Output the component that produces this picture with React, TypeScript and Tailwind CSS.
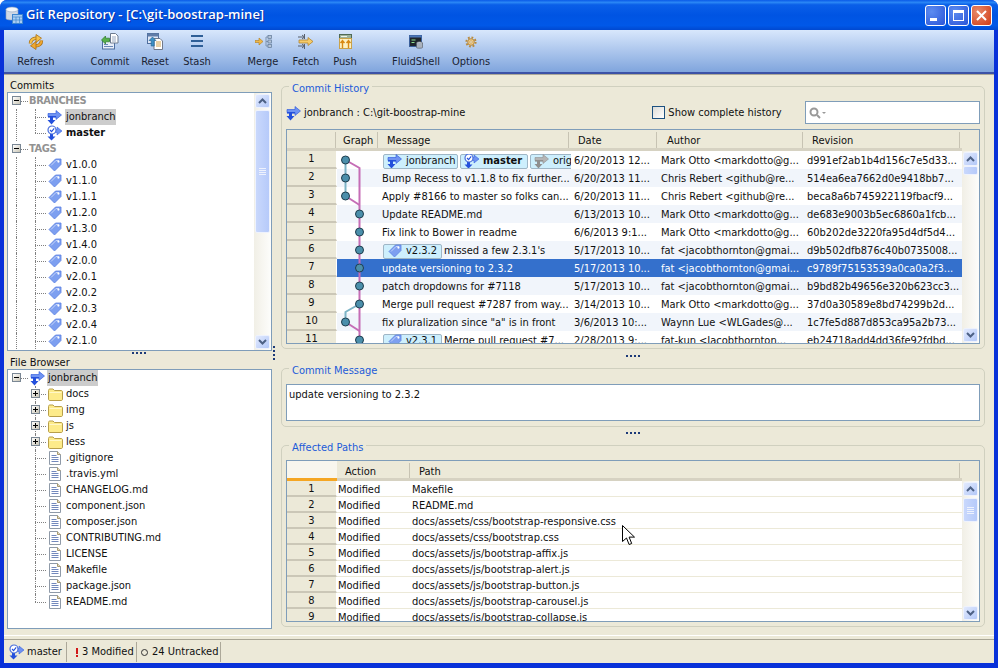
import type { ReactNode } from "react";

const COMMITS = [
  { msg: "", date: "6/20/2013 12...", author: "Mark Otto <markdotto@g...", rev: "d991ef2ab1b4d156c7e5d33..." },
  { msg: "Bump Recess to v1.1.8 to fix further...", date: "6/20/2013 11...", author: "Chris Rebert <github@re...", rev: "514ea6ea7662d0e9418bb7..." },
  { msg: "Apply #8166 to master so folks can...", date: "6/20/2013 11...", author: "Chris Rebert <github@re...", rev: "beca8a6b745922119fbacf9..." },
  { msg: "Update README.md", date: "6/13/2013 10...", author: "Mark Otto <markdotto@g...", rev: "de683e9003b5ec6860a1fcb..." },
  { msg: "Fix link to Bower in readme", date: "6/6/2013 9:1...", author: "Mark Otto <markdotto@g...", rev: "60b202de3220fa95d4df5d4..." },
  { msg: "missed a few 2.3.1's", tag: "v2.3.2", date: "5/17/2013 10...", author: "fat <jacobthornton@gmai...", rev: "d9b502dfb876c40b0735008..." },
  { msg: "update versioning to 2.3.2", date: "5/17/2013 10...", author: "fat <jacobthornton@gmai...", rev: "c9789f75153539a0ca0a2f3..." },
  { msg: "patch dropdowns for #7118", date: "5/17/2013 10...", author: "fat <jacobthornton@gmai...", rev: "b9bd82b49656e320b623cc3..." },
  { msg: "Merge pull request #7287 from way...", date: "3/14/2013 10...", author: "Mark Otto <markdotto@g...", rev: "37d0a30589e8bd74299b2d..." },
  { msg: 'fix pluralization since "a" is in front', date: "3/6/2013 10:...", author: "Waynn Lue <WLGades@...", rev: "1c7fe5d887d853ca95a2b73..." },
  { msg: "Merge pull request #7...", tag: "v2.3.1", date: "2/28/2013 9:...", author: "fat-kun <Jacobthornton...", rev: "eb24718add4dd36fe92fdbd..." },
];

const PATHS = [
  "Makefile",
  "README.md",
  "docs/assets/css/bootstrap-responsive.css",
  "docs/assets/css/bootstrap.css",
  "docs/assets/js/bootstrap-affix.js",
  "docs/assets/js/bootstrap-alert.js",
  "docs/assets/js/bootstrap-button.js",
  "docs/assets/js/bootstrap-carousel.js",
  "docs/assets/js/bootstrap-collapse.js",
];

const TAGS = ["v1.0.0", "v1.1.0", "v1.1.1", "v1.2.0", "v1.3.0", "v1.4.0", "v2.0.0", "v2.0.1", "v2.0.2", "v2.0.3", "v2.0.4", "v2.1.0"];
const FOLDERS = ["docs", "img", "js", "less"];
const FILES = [".gitignore", ".travis.yml", "CHANGELOG.md", "component.json", "composer.json", "CONTRIBUTING.md", "LICENSE", "Makefile", "package.json", "README.md"];

/* ---------- icons ---------- */

function BranchIcon({ gray = false }: { gray?: boolean }) {
  const dark = gray ? "#8f8f8f" : "#2450dc";
  const light = gray ? "#b5b5b5" : "#6f93f2";
  return (
    <svg width="16" height="16" viewBox="0 0 16 16" className="shrink-0">
      <path d="M3 8h3v3h2.5L4.5 15.5.5 11H3z" fill={dark} />
      <path d="M1 4.5h8V1.5l5.5 4.5L9 10.5V7.5H1z" fill={light} stroke={dark} strokeWidth="0.6" />
      <rect x="1" y="7" width="8" height="1.6" fill={dark} />
    </svg>
  );
}

function MasterIcon() {
  return (
    <svg width="16" height="16" viewBox="0 0 16 16" className="shrink-0">
      <path d="M3 9h3v2.5h2.5L4.5 15.5.5 11.5H3z" fill="#2450dc" />
      <path d="M8 4.5h2V2l5 4-5 4V7.5H7z" fill="#6f93f2" stroke="#2450dc" strokeWidth="0.5" />
      <circle cx="5" cy="5" r="4" fill="#fff" stroke="#4a6fdc" strokeWidth="1.2" />
      <path d="M3 5l1.6 1.6L7.2 3.4" fill="none" stroke="#2450dc" strokeWidth="1.1" />
    </svg>
  );
}

function TagIcon() {
  return (
    <svg width="14" height="14" viewBox="0 0 14 14" className="shrink-0">
      <path d="M1 7.5L7.5 1H13v5.5L6.5 13z" fill="#7d9ff0" stroke="#5a80e2" strokeWidth="0.8" strokeLinejoin="round" />
      <path d="M3 7.5L8 2.5h3" fill="none" stroke="#c4d4fa" strokeWidth="1" />
      <circle cx="10.4" cy="3.6" r="1.1" fill="#fff" />
    </svg>
  );
}

function FolderIcon() {
  return (
    <svg width="15" height="13" viewBox="0 0 15 13" className="shrink-0">
      <path d="M.5 2.5C.5 1.5 1 1 2 1h3l1.5 1.5h6.5c1 0 1.5.5 1.5 1.5v7c0 1-.5 1.5-1.5 1.5H2c-1 0-1.5-.5-1.5-1.5z" fill="#fdeb8a" stroke="#b89f4a" />
      <rect x="1.5" y="4" width="12" height="1" fill="#fff7c8" />
    </svg>
  );
}

function FileIcon() {
  return (
    <svg width="12" height="14" viewBox="0 0 12 14" className="shrink-0">
      <path d="M.5.5h8l3 3v10H.5z" fill="#fff" stroke="#8f9aa8" />
      <path d="M8.5.5v3h3" fill="#e9dcb8" stroke="#a89a70" />
      <path d="M2.5 4.5h5M2.5 6.5h7M2.5 8.5h7M2.5 10.5h7" stroke="#7288bc" />
    </svg>
  );
}

function ScrollArrow({ down = false }: { down?: boolean }) {
  return (
    <svg width="9" height="6" viewBox="0 0 9 6">
      <path d={down ? "M1 1l3.5 3.5L8 1" : "M1 5l3.5-3.5L8 5"} fill="none" stroke="#4d6185" strokeWidth="2" />
    </svg>
  );
}

function RefreshIcon() {
  return (
    <svg width="16" height="16" viewBox="0 0 16 16">
      <path d="M2.5 9.5C2.5 6 5 4 8.5 4.2" fill="none" stroke="#a8701a" strokeWidth="3.4" />
      <path d="M2.5 9.5C2.5 6 5 4 8.5 4.2" fill="none" stroke="#f5c24a" strokeWidth="2" />
      <path d="M8 0.5L13.5 4.2 8 8.5z" fill="#f5c24a" stroke="#a8701a" strokeWidth="0.8" />
      <path d="M13.5 6.5C13.5 10 11 12 7.5 11.8" fill="none" stroke="#a8701a" strokeWidth="3.4" />
      <path d="M13.5 6.5C13.5 10 11 12 7.5 11.8" fill="none" stroke="#f0a830" strokeWidth="2" />
      <path d="M8 7.5L2.5 11.8 8 15.5z" fill="#f0a830" stroke="#a8701a" strokeWidth="0.8" />
    </svg>
  );
}

function CommitIcon() {
  return (
    <svg width="18" height="17" viewBox="0 0 18 17">
      <rect x="1.5" y="7.5" width="12" height="8.5" fill="#e8eefa" stroke="#4f6f9f" />
      <path d="M3 13.5h9M3 11.5h4" stroke="#6a88b6" />
      <path d="M9.5.5h5l2.5 2.5v7H9.5z" fill="#fff" stroke="#6f7c90" />
      <path d="M11 4h4M11 6h4M11 8h4" stroke="#9aa8bf" />
      <path d="M.5 7l4-4v2.2h4v3.6h-4V11z" fill="#57b04a" stroke="#2c7a2a" strokeWidth="0.7" />
    </svg>
  );
}

function ResetIcon() {
  return (
    <svg width="16" height="17" viewBox="0 0 16 17">
      <rect x=".5" y=".5" width="11" height="10" fill="#dfe7f7" stroke="#4f6f9f" />
      <rect x=".5" y=".5" width="11" height="3" fill="#5f7ca8" />
      <path d="M7 5.5h6l2.5 2.5v8.5H7z" fill="#fff" stroke="#70798a" />
      <path d="M9 9h5M9 11h5M9 13h5" stroke="#d2a14a" />
      <path d="M5.5 4L2 7.5h2.2v5.5h3V7.5h1.8z" fill="#3d8fc4" stroke="#1d5f90" strokeWidth="0.6" />
    </svg>
  );
}

function StashIcon() {
  return (
    <svg width="14" height="13" viewBox="0 0 14 13">
      <rect x="1" y="0" width="12" height="2" fill="#2f5f97" />
      <rect x="1" y="5" width="12" height="2" fill="#2f5f97" />
      <rect x="1" y="10" width="12" height="2" fill="#2f5f97" />
    </svg>
  );
}

function MergeIcon() {
  return (
    <svg width="17" height="13" viewBox="0 0 17 13">
      <path d="M0 5.5h4V3l4 3.5L4 10V7.5H0z" fill="#f0b848" stroke="#b07c1c" strokeWidth="0.6" />
      <path d="M11 2v9M11 2h2M11 6.5h2M11 11h2" fill="none" stroke="#7f93ad" />
      <rect x="13" y=".5" width="3.5" height="3" fill="#b5c4d8" stroke="#5f7896" strokeWidth="0.7" />
      <rect x="13" y="5" width="3.5" height="3" fill="#b5c4d8" stroke="#5f7896" strokeWidth="0.7" />
      <rect x="13" y="9.5" width="3.5" height="3" fill="#b5c4d8" stroke="#5f7896" strokeWidth="0.7" />
    </svg>
  );
}

function FetchIcon() {
  return (
    <svg width="16" height="15" viewBox="0 0 16 15">
      <path d="M0 3h6M4 1l2.5 2L4 5M0 12h6M4 10l2.5 2L4 14" fill="none" stroke="#59606b" />
      <path d="M6.5 0v5M6.5 10v5" stroke="#59606b" />
      <path d="M1 6h9V3.5l5 4-5 4V9H1z" fill="#f5cb6a" stroke="#b07c1c" strokeWidth="0.7" />
    </svg>
  );
}

function PushIcon() {
  return (
    <svg width="13" height="15" viewBox="0 0 13 15">
      <rect x=".5" y=".5" width="12" height="4" fill="#9db29a" stroke="#4f6a55" />
      <rect x="2" y="2" width="6" height="1" fill="#eef4ea" />
      <rect x=".5" y="4.5" width="12" height="10" fill="#fdf1c2" stroke="#c9a24a" />
      <path d="M3.5 14V8M1.5 9l2-2.5 2 2.5M9.5 14V8M7.5 9l2-2.5 2 2.5" fill="none" stroke="#d98a14" strokeWidth="1.4" />
    </svg>
  );
}

function ShellIcon() {
  return (
    <svg width="14" height="14" viewBox="0 0 14 14">
      <rect x=".5" y=".5" width="12" height="11" fill="#20262c" stroke="#3a5f9a" />
      <rect x=".5" y=".5" width="12" height="2" fill="#4a76b8" />
      <path d="M2.5 5h4M2.5 7.5h3" stroke="#8fe08f" />
      <ellipse cx="10.5" cy="8" rx="3" ry="1.3" fill="#c9ced6" stroke="#4f5660" strokeWidth="0.6" />
      <path d="M7.5 8v4.5c0 1 6 1 6 0V8" fill="#aab2bd" stroke="#4f5660" strokeWidth="0.6" />
    </svg>
  );
}

function OptionsIcon() {
  return (
    <svg width="12" height="12" viewBox="0 0 12 12">
      <circle cx="6" cy="6" r="4.6" fill="none" stroke="#b98a3c" strokeWidth="2" strokeDasharray="1.8 1.8" />
      <circle cx="6" cy="6" r="3.3" fill="#f0cc88" stroke="#a8782c" strokeWidth="0.8" />
      <circle cx="6" cy="6" r="1.2" fill="#fff6e0" stroke="#a8782c" strokeWidth="0.5" />
    </svg>
  );
}

function AppIcon() {
  return (
    <svg width="18" height="18" viewBox="0 0 18 18" className="shrink-0">
      <path d="M1 3.5v9c0 2 12 2 12 0v-9z" fill="#cfd8e6" stroke="#8ea3bd" strokeWidth="0.6" />
      <ellipse cx="7" cy="3.5" rx="6" ry="2.4" fill="#f3f6fb" stroke="#8ea3bd" strokeWidth="0.6" />
      <rect x="7.5" y="8.5" width="10" height="9" fill="#a9cdf2" stroke="#3f86cf" />
      <path d="M7.5 11h10M11 11v6.5M14.5 11v6.5M7.5 14h10" stroke="#3f86cf" strokeWidth="0.7" />
    </svg>
  );
}

function CursorArrow() {
  return (
    <svg width="14" height="22" viewBox="0 0 14 22">
      <path d="M.5.5v16l4-3.5 2.6 6.5 2.6-1-2.6-6.4h5.4z" fill="#fff" stroke="#000" />
    </svg>
  );
}

/* ---------- small widgets ---------- */

function Expander({ open }: { open: boolean }) {
  return (
    <span className="relative block h-[9px] w-[9px] border border-[#7a8794] bg-[linear-gradient(135deg,#ffffff,#c9c5b5)]">
      <span className="absolute left-[1px] top-[3px] h-[1px] w-[5px] bg-black" />
      {!open && <span className="absolute left-[3px] top-[1px] h-[5px] w-[1px] bg-black" />}
    </span>
  );
}

type TreeRowProps = {
  depth: 0 | 1;
  label: string;
  icon?: ReactNode;
  expander?: "open" | "closed";
  last?: boolean;
  outerLine?: boolean;
  selected?: boolean;
  bold?: boolean;
  section?: boolean;
};

function TreeRow({ depth, label, icon, expander, last, outerLine, selected, bold, section }: TreeRowProps) {
  return (
    <div className="relative flex h-4 items-center whitespace-nowrap">
      {outerLine && <span className="absolute left-[8px] top-0 h-4 border-l border-dotted border-[#808080]" />}
      {depth === 1 && (
        <>
          <span className={`absolute left-[27px] top-0 border-l border-dotted border-[#808080] ${last ? "h-2" : "h-4"}`} />
          <span className="absolute left-[27px] top-2 w-[11px] border-t border-dotted border-[#808080]" />
        </>
      )}
      {depth === 0 && <span className="absolute left-[8px] top-2 w-[12px] border-t border-dotted border-[#808080]" />}
      {expander && (
        <span className={`absolute top-[3px] ${depth === 0 ? "left-[4px]" : "left-[23px]"}`}>
          <Expander open={expander === "open"} />
        </span>
      )}
      {depth === 0 ? (
        icon ? (
          <span className="ml-[22px] mr-[1px] flex w-4 justify-center">{icon}</span>
        ) : (
          <span className="ml-[20px]" />
        )
      ) : (
        <span className="ml-[39px] mr-[2px] flex w-4 items-center justify-center">{icon}</span>
      )}
      <span
        className={`h-4 px-[1px] leading-4 ${selected ? "bg-[#cccccc]" : ""} ${bold ? "font-bold" : ""} ${section ? "font-bold tracking-[-0.4px] text-[#929292]" : ""}`}
      >
        {label}
      </span>
    </div>
  );
}

function ScrollBar({ thumbTop, thumbHeight, thumbLines }: { thumbTop: string; thumbHeight: string; thumbLines?: boolean }) {
  const btn =
    "flex h-[14px] w-[15px] items-center justify-center rounded-[2px] border border-[#eef2fd] bg-[linear-gradient(135deg,#e2eafe,#b3c8f8)]";
  return (
    <div className="flex h-full w-[17px] shrink-0 flex-col items-center bg-[linear-gradient(90deg,#f1efe6,#fdfdfb)] py-[1px]">
      <div className={btn}>
        <ScrollArrow />
      </div>
      <div className={`w-[15px] ${thumbTop}`} />
      <div
        className={`flex w-[15px] flex-col items-center justify-center gap-[1px] rounded-[2px] border border-[#eef2fd] bg-[linear-gradient(90deg,#c9d8fc,#b6cafa)] ${thumbHeight}`}
      >
        {thumbLines &&
          [0, 1, 2, 3].map((i) => <span key={i} className="h-[1px] w-[7px] bg-[#eef2fd]" />)}
      </div>
      <div className="flex-1" />
      <div className={btn}>
        <ScrollArrow down />
      </div>
    </div>
  );
}

function SashDots() {
  return (
    <div className="flex gap-[2px]">
      {[0, 1, 2, 3].map((i) => (
        <span key={i} className="h-[2px] w-[2px] bg-[#1c3a78]" />
      ))}
    </div>
  );
}

function Group({ title, className, children }: { title: string; className: string; children: ReactNode }) {
  return (
    <section className={`relative rounded-[5px] border border-[#d0d0bf] px-1 ${className}`}>
      <span className="absolute left-[7px] top-[-5px] bg-[#ece9d8] px-[3px] leading-[13px] text-[#1c5bd8]">{title}</span>
      {children}
    </section>
  );
}

function HeaderCell({ label, className }: { label: string; className: string }) {
  return (
    <div className={`flex h-full items-center border-r border-[#c7c3b3] ${className}`}>{label}</div>
  );
}

function Chip({ icon, className, children }: { icon: ReactNode; className: string; children: ReactNode }) {
  return (
    <span className={`flex h-[15px] shrink-0 items-center gap-[3px] rounded-[2px] border border-[#9fb6c6] bg-[#cdeffd] pl-[3px] ${className}`}>
      <span className="flex h-[14px] w-[16px] items-center justify-center overflow-hidden">{icon}</span>
      {children}
    </span>
  );
}

function RowNum({ n, className }: { n: number; className: string }) {
  return (
    <div className={`flex w-[50px] shrink-0 items-center justify-center border-b-2 border-r border-b-[#cbc7b7] border-r-white bg-[#ece9d8] ${className}`}>
      {n}
    </div>
  );
}

function CommitGraph() {
  const tall = [9, 27, 45];
  const main = [63, 81, 99, 117, 135, 153, 189];
  return (
    <svg width="41" height="198" viewBox="0 0 41 198" className="pointer-events-none absolute left-[50px] top-0">
      <path d="M8.5 9L22.5 17V189" fill="none" stroke="#c56db6" strokeWidth="2" />
      <path d="M8.5 45L22.5 54" fill="none" stroke="#c56db6" strokeWidth="2" />
      <path d="M8.5 171L22.5 180" fill="none" stroke="#c56db6" strokeWidth="2" />
      <path d="M8.5 9V45" fill="none" stroke="#7db4c6" strokeWidth="2" />
      <path d="M22.5 153L8.5 161V171" fill="none" stroke="#7db4c6" strokeWidth="2" />
      {tall.map((y) => (
        <circle key={y} cx="8.5" cy={y} r="4" fill="#4b8fab" stroke="#1f3d4d" />
      ))}
      <circle cx="8.5" cy="171" r="4" fill="#4b8fab" stroke="#1f3d4d" />
      {main.map((y) => (
        <circle key={y} cx="22.5" cy={y} r="4" fill="#4b8fab" stroke="#1f3d4d" />
      ))}
    </svg>
  );
}

const TOOLS = [
  { label: "Refresh", icon: <RefreshIcon />, cls: "w-[64px]" },
  { label: "Commit", icon: <CommitIcon />, cls: "ml-[21px] w-[42px]" },
  { label: "Reset", icon: <ResetIcon />, cls: "ml-[3px] w-[42px]" },
  { label: "Stash", icon: <StashIcon />, cls: "w-[42px]" },
  { label: "Merge", icon: <MergeIcon />, cls: "ml-[24px] w-[42px]" },
  { label: "Fetch", icon: <FetchIcon />, cls: "ml-[1px] w-[42px]" },
  { label: "Push", icon: <PushIcon />, cls: "w-[36px]" },
  { label: "FluidShell", icon: <ShellIcon />, cls: "ml-[25px] w-[56px]" },
  { label: "Options", icon: <OptionsIcon />, cls: "ml-[3px] w-[48px]" },
];

export default function App() {
  return (
    <div className="flex h-[668px] w-[998px] flex-col overflow-hidden rounded-t-[7px] bg-[#0831d9] font-['DejaVu_Sans_Condensed','DejaVu_Sans',sans-serif] text-[11px] text-[#101010]">
      {/* Title bar */}
      <header className="flex h-[30px] shrink-0 items-center bg-[linear-gradient(180deg,#0a5ae8_0%,#2a86f5_8%,#0a5fe8_16%,#0054e3_50%,#0058e8_85%,#0048d0_100%)] pl-[5px] pr-[6px]">
        <AppIcon />
        <span className="ml-[3px] font-['Open_Sans',sans-serif] text-[13px] font-semibold text-white [text-shadow:1px_1px_0_#0a2fa0]">
          Git Repository - [C:\git-boostrap-mine]
        </span>
        <div className="ml-auto flex gap-[2px]">
          <button className="relative h-[21px] w-[21px] rounded-[3px] border border-white bg-[radial-gradient(circle_at_30%_30%,#5d8cf0,#2a55d8)]">
            <span className="absolute bottom-[4px] left-[4px] h-[3px] w-[7px] bg-white" />
          </button>
          <button className="relative h-[21px] w-[21px] rounded-[3px] border border-white bg-[radial-gradient(circle_at_30%_30%,#5d8cf0,#2a55d8)]">
            <span className="absolute left-[4px] top-[4px] h-[11px] w-[11px] border border-t-[3px] border-white" />
          </button>
          <button className="flex h-[21px] w-[21px] items-center justify-center rounded-[3px] border border-white bg-[radial-gradient(circle_at_30%_30%,#e88a6a,#d03a14)]">
            <svg width="11" height="11" viewBox="0 0 11 11">
              <path d="M1 1l9 9M10 1l-9 9" stroke="#fff" strokeWidth="2" />
            </svg>
          </button>
        </div>
      </header>

      <div className="mx-[4px] mb-[5px] flex min-h-0 flex-1 flex-col bg-[#ece9d8]">
        {/* Toolbar */}
        <nav className="flex h-[44px] shrink-0 items-start border-b-2 border-b-[#3c52a6] bg-[linear-gradient(180deg,#d8e7fc,#80a5dd)] pt-[2px] shadow-[0_1px_0_#aca899]">
          {TOOLS.map((t) => (
            <div key={t.label} className={`flex flex-col items-center ${t.cls}`}>
              <div className="flex h-[19px] items-center justify-center">{t.icon}</div>
              <span className="mt-[3px] text-[#1a2333]">{t.label}</span>
            </div>
          ))}
        </nav>

        {/* Panels */}
        <main className="relative flex min-h-0 flex-1">
          <div className="relative ml-[3px] mr-[9px] w-[265px] shrink-0">
            <div className="h-[18px] pl-[3px] pt-[5px] leading-[14px]">Commits</div>
            <div className="flex h-[259px] overflow-hidden border border-[#7f9db9] bg-white">
              <div className="min-w-0 flex-1">
                <TreeRow depth={0} section label="BRANCHES" expander="open" />
                <TreeRow depth={1} outerLine icon={<BranchIcon />} label="jonbranch" selected />
                <TreeRow depth={1} outerLine last icon={<MasterIcon />} label="master" bold />
                <TreeRow depth={0} section label="TAGS" expander="open" />
                {TAGS.map((t) => (
                  <TreeRow key={t} depth={1} outerLine icon={<TagIcon />} label={t} />
                ))}
              </div>
              <ScrollBar thumbTop="h-[2px]" thumbHeight="h-[123px]" thumbLines />
            </div>
            <div className="relative h-[18px] pl-[3px] pt-[5px] leading-[14px]">
              File Browser
              <span className="absolute left-[125px] top-[1px]">
                <SashDots />
              </span>
            </div>
            <div className="h-[260px] overflow-hidden border border-[#7f9db9] bg-white">
              <TreeRow depth={0} expander="open" icon={<BranchIcon />} label="jonbranch" selected />
              {FOLDERS.map((f) => (
                <TreeRow key={f} depth={1} expander="closed" icon={<FolderIcon />} label={f} />
              ))}
              {FILES.map((f, i) => (
                <TreeRow key={f} depth={1} last={i === FILES.length - 1} icon={<FileIcon />} label={f} />
              ))}
            </div>
            <span className="absolute left-[266px] top-[272px] flex flex-col gap-[2px]">
              {[0, 1, 2, 3].map((i) => (
                <span key={i} className="h-[2px] w-[2px] bg-[#1c3a78]" />
              ))}
            </span>
          </div>

          <div className="flex w-[704px] shrink-0 flex-col pt-[12px]">
            {/* Commit history */}
            <Group title="Commit  History" className="h-[263px] pt-[14px]">
              <div className="flex h-[23px] items-center">
                <BranchIcon />
                <span className="ml-[2px] pt-[1px]">jonbranch : C:\git-boostrap-mine</span>
                <span className="ml-[187px] h-[13px] w-[13px] border border-[#1c5180] bg-[linear-gradient(135deg,#dcdcd7,#ffffff)]" />
                <span className="ml-[3px] pt-[1px]">Show complete history</span>
                <div className="ml-auto flex h-[23px] w-[175px] items-center border border-[#7f9db9] bg-white pl-[3px]">
                  <svg width="18" height="12" viewBox="0 0 18 12">
                    <circle cx="5" cy="5" r="3.5" fill="none" stroke="#999" strokeWidth="2" />
                    <path d="M8 8l3 3" stroke="#999" strokeWidth="2" />
                    <path d="M13 5h4l-2 2z" fill="#999" />
                  </svg>
                </div>
              </div>
              <div className="mt-[5px] flex h-[215px] overflow-hidden border border-[#7f9db9] bg-white">
                <div className="min-w-0 flex-1">
                  <div className="flex h-[21px] border-b-[3px] border-b-[#d6d2c2] bg-[#ece9d8] pt-[2px]">
                    <HeaderCell label="" className="w-[49px]" />
                    <HeaderCell label="Graph" className="w-[42px] pl-[7px] pt-[2px]" />
                    <HeaderCell label="Message" className="w-[191px] pl-[9px] pt-[2px]" />
                    <HeaderCell label="Date" className="w-[88px] pl-[9px] pt-[2px]" />
                    <HeaderCell label="Author" className="w-[146px] pl-[10px] pt-[2px]" />
                    <HeaderCell label="Revision" className="w-[157px] pl-[9px] pt-[2px]" />
                  </div>
                  <div className="relative">
                    {COMMITS.map((c, i) => {
                      const selected = i === 6;
                      const stripe = i % 2 === 1 ? "bg-[#f1f5fb]" : "bg-white";
                      return (
                        <div key={c.rev} className="flex h-[18px]">
                          <RowNum n={i + 1} className="" />
                          <div className={`flex min-w-0 flex-1 items-center whitespace-nowrap pt-[2px] ${selected ? "bg-[#3470cc] text-white" : stripe}`}>
                            <div className="w-[41px] shrink-0" />
                            <div className="flex w-[193px] shrink-0 items-center gap-[2px] overflow-hidden pl-[4px]">
                              {i === 0 && (
                                <>
                                  <Chip icon={<BranchIcon />} className="ml-[1px] w-[75px]">jonbranch</Chip>
                                  <Chip icon={<MasterIcon />} className="w-[68px] font-bold">master</Chip>
                                  <Chip icon={<BranchIcon gray />} className="w-[60px]">orig</Chip>
                                </>
                              )}
                              {c.tag && (
                                <Chip icon={<TagIcon />} className="ml-[1px] w-[59px]">{c.tag}</Chip>
                              )}
                              {c.msg && <span>{c.msg}</span>}
                            </div>
                            <div className="w-[86px] shrink-0 overflow-hidden pl-[3px]">{c.date}</div>
                            <div className="w-[146px] shrink-0 overflow-hidden pl-[4px]">{c.author}</div>
                            <div className="w-[159px] shrink-0 overflow-hidden pl-[4px]">{c.rev}</div>
                          </div>
                        </div>
                      );
                    })}
                    <CommitGraph />
                  </div>
                </div>
                <div className="flex w-[17px] shrink-0 flex-col">
                  <div className="h-[21px] shrink-0 bg-[#ece9d8]" />
                  <div className="min-h-0 flex-1">
                    <ScrollBar thumbTop="h-0" thumbHeight="h-[9px]" />
                  </div>
                </div>
              </div>
            </Group>

            <div className="flex h-[19px] justify-center pt-[6px]">
              <SashDots />
            </div>

            {/* Commit message */}
            <Group title="Commit Message" className="h-[59px] pt-[15px]">
              <div className="flex h-[37px] border border-[#7f9db9] bg-white px-[2px] pt-[2px]">update versioning to 2.3.2</div>
            </Group>

            <div className="flex h-[18px] justify-center pt-[5px]">
              <SashDots />
            </div>

            {/* Affected paths */}
            <Group title="Affected Paths" className="h-[182px] pt-[14px]">
              <div className="relative flex h-[162px] overflow-hidden border border-[#7f9db9] bg-white">
                <div className="min-w-0 flex-1">
                  <div className="flex h-[20px]">
                    <div className="w-[50px] shrink-0 border-b-[3px] border-b-[#f5a623] bg-[#f8f6ee]" />
                    <div className="flex min-w-0 flex-1 border-b-[3px] border-b-[#d6d2c2] bg-[#ece9d8] pt-[2px]">
                      <HeaderCell label="Action" className="w-[73px] pl-[8px] pt-[4px]" />
                      <HeaderCell label="Path" className="w-[550px] pl-[9px] pt-[4px]" />
                    </div>
                  </div>
                  {PATHS.map((p, i) => (
                    <div key={p} className="flex h-4">
                      <RowNum n={i + 1} className="pt-[3px]" />
                      <div className="flex min-w-0 flex-1 items-center whitespace-nowrap border-b border-b-[#ece9d8] pt-[3px]">
                        <div className="w-[73px] shrink-0 pl-[1px]">Modified</div>
                        <div className="min-w-0 flex-1 pl-[2px]">{p}</div>
                      </div>
                    </div>
                  ))}
                </div>
                <div className="flex w-[17px] shrink-0 flex-col">
                  <div className="h-[20px] shrink-0 bg-[#ece9d8]" />
                  <div className="min-h-0 flex-1">
                    <ScrollBar thumbTop="h-[2px]" thumbHeight="h-[24px]" thumbLines />
                  </div>
                </div>
                <span className="pointer-events-none absolute left-[335px] top-[64px]">
                  <CursorArrow />
                </span>
              </div>
            </Group>
          </div>
        </main>

        {/* Status bar */}
        <footer className="flex h-[28px] shrink-0 items-center border-t border-t-white pl-[5px] pt-[5px] shadow-[inset_0_3px_0_#ece9d8,inset_0_4px_0_#a8a595]">
          <MasterIcon />
          <span className="ml-[2px] w-[39px]">master</span>
          <span className="h-[20px] border-r border-[#aca899]" />
          <span className="ml-[6px] flex w-[7px] flex-col items-center gap-[1px]">
            <span className="h-[6px] w-[2px] bg-[#d01818]" />
            <span className="h-[2px] w-[2px] bg-[#d01818]" />
          </span>
          <span className="ml-[2px] w-[54px]">3 Modified</span>
          <span className="h-[20px] border-r border-[#aca899]" />
          <span className="ml-[4px] h-[7px] w-[7px] rounded-full border border-[#333]" />
          <span className="ml-[4px] w-[68px]">24 Untracked</span>
          <span className="h-[20px] border-r border-[#aca899]" />
        </footer>
      </div>
    </div>
  );
}
